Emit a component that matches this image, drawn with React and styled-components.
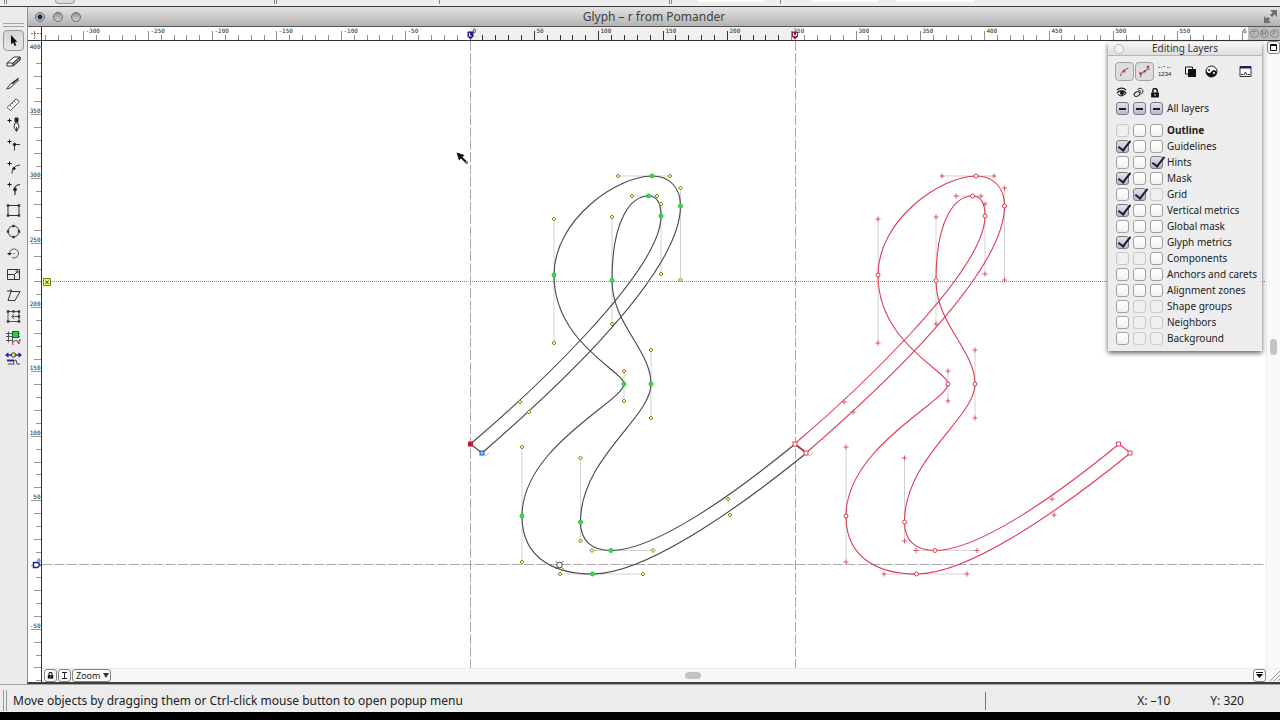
import { useState } from 'react'
import styled, { createGlobalStyle, css } from 'styled-components'

const GlobalStyle = createGlobalStyle`
  * { box-sizing: border-box; }
  html, body, #root { height: 100%; }
  body {
    margin: 0;
    background: #000;
    color: #222;
    font-family: "Noto Sans", "Open Sans", sans-serif;
    overflow: hidden;
  }
  button, select, input { font: inherit; color: inherit; margin: 0; padding: 0; }
  svg { display: block; }
`;

// ---------- page frame ----------
const Page = styled.div`
  display: flex;
  flex-direction: column;
  height: 100vh;
  padding-bottom: 8px;
`;

const TopStrip = styled.header`
  display: flex;
  height: 7px;
  background: #eeeeee;
  border-bottom: 1px solid #3d3f3d;
`;

const StripPart = styled.div`
  width: ${p => p.$width}px;
  height: ${p => p.$tall || 4}px;
  border-right: ${p => p.$edge || 'none'};
  background: ${p => (p.$field ? '#fff' : 'transparent')};
`;

const StripButton = styled.div`
  width: 20px;
  height: 4px;
  border: 1px solid #999;
  border-top: 0;
  border-radius: 0 0 4px 4px;
  background: #ddd;
`;

const Body = styled.main`
  flex: 1;
  min-height: 0;
  display: flex;
`;

const Tools = styled.nav`
  width: 27px;
  flex: none;
  background: #ebebeb;
  display: flex;
  flex-direction: column;
  align-items: center;
  padding-top: 16px;
`;

const ToolGrip = styled.div`
  width: 21px;
  height: 4px;
  border: solid #a5a5a5;
  border-width: 1px 0;
  margin-bottom: 3px;
`;

const ToolList = styled.div`
  height: 340px;
  display: flex;
  flex-direction: column;
  justify-content: space-between;
`;

const ToolButton = styled.button`
  width: 21px;
  height: 21px;
  display: grid;
  place-items: center;
  border: 1px solid transparent;
  border-radius: 4px;
  background: none;
  ${p => p.$on && css`
    border-color: #969696;
    background: linear-gradient(#d6d6d6, #e6e6e6);
  `}
`;

const Window = styled.section`
  flex: 1;
  min-width: 0;
  display: flex;
  flex-direction: column;
  border-left: 1px solid #8f8f8f;
  border-bottom: 2px solid #3c3f3c;
  background: #fff;
`;

const TitleBar = styled.div`
  height: 20px;
  display: grid;
  grid-template-columns: 1fr auto 1fr;
  align-items: center;
  padding: 0 3px 0 7px;
  background: linear-gradient(#e3e3e3, #b3b3b3);
  border-bottom: 1px solid #555;
`;

const Title = styled.h1`
  margin: 0 4px 0 0;
  font-size: 12px;
  line-height: 16px;
  font-weight: 400;
  color: #424242;
`;

const Lights = styled.div`
  display: flex;
  gap: 8px;
`;

const Light = styled.button`
  width: 10px;
  height: 10px;
  border: 1px solid #666b70;
  border-radius: 50%;
  background: ${p => (p.$dot
    ? 'radial-gradient(circle, #23303c 0 2px, #b6c2cc 3px)'
    : 'linear-gradient(#8f969c, #ccd3d9)')};
`;

const Expand = styled.button`
  justify-self: end;
  border: 0;
  background: none;
`;

// ---------- rulers and drawing area ----------
const Workspace = styled.div`
  flex: 1;
  min-height: 0;
  position: relative;
  display: grid;
  grid-template-columns: 14px 1fr 14px;
  grid-template-rows: 14px 1fr 14px;
`;

const Corner = styled.div`
  border-right: 1px solid #333;
  border-bottom: 1px solid #333;
`;

const TopRuler = styled.div`
  grid-column: 2 / 4;
  display: flex;
  overflow: hidden;
  border-bottom: 1px solid #333;
`;

const SideRuler = styled.div`
  grid-column: 1;
  grid-row: 2 / 4;
  overflow: hidden;
  border-right: 1px solid #333;
`;

const RulerSvg = styled.svg`
  flex: 1;
  min-width: 0;
  width: 100%;
  height: 100%;
  text {
    font-family: "DejaVu Sans Mono", monospace;
    font-size: 6px;
    fill: #222;
  }
`;

const RulerModes = styled.div`
  width: 32px;
  display: flex;
  align-items: center;
  justify-content: center;
  gap: 1px;
  background: #bdbdbd;
`;

const Mode = styled.button`
  width: 9px;
  height: 9px;
  border: 1px solid #858585;
  border-radius: 50%;
  background: none;
  color: #666;
  font-size: 6px;
  line-height: 7px;
  text-align: center;
`;

const Canvas = styled.svg`
  grid-column: 2;
  grid-row: 2;
  width: 100%;
  height: 100%;
  min-height: 0;
  overflow: hidden;
`;

const SideScroll = styled.div`
  grid-column: 3;
  grid-row: 2;
  display: flex;
  flex-direction: column;
  align-items: center;
  background: #fafafa;
  border-left: 1px solid #ececec;
`;

const Spacer = styled.div`
  flex: ${p => p.$grow};
`;

const ScrollThumb = styled.div`
  width: ${p => (p.$wide ? 16 : 7)}px;
  height: ${p => (p.$wide ? 7 : 16)}px;
  border-radius: 4px;
  background: #c4c4c4;
`;

const BottomBar = styled.div`
  grid-column: 2 / 4;
  grid-row: 3;
  display: flex;
  align-items: center;
  padding-left: 2px;
  background: #f7f7f7;
  border-top: 1px solid #ececec;
`;

const BarGroup = styled.div`
  display: flex;
  gap: ${p => p.$gap}px;
`;

const SmallButton = styled.button`
  width: 13px;
  height: 13px;
  display: grid;
  place-items: center;
  border: 1px solid #858585;
  border-radius: 3px;
  background: #fafafa;
`;

const ZoomBox = styled.label`
  width: 39px;
  height: 13px;
  display: flex;
  align-items: center;
  padding-left: 3px;
  border: 1px solid #858585;
  border-radius: 3px;
  background: #fafafa;
  select {
    appearance: none;
    width: 27px;
    flex: none;
    border: 0;
    background: none;
    font-size: 9px;
    line-height: 11px;
  }
`;

// ---------- status bar ----------
const Status = styled.footer`
  height: 28px;
  display: flex;
  align-items: center;
  padding: 4px 36px 0 3px;
  border-top: 1px solid #a3a3a3;
  background: #ececec;
  font-size: 12px;
  line-height: 18px;
`;

const StatusGrip = styled.div`
  width: 4px;
  height: 21px;
  border: solid #999;
  border-width: 0 1px;
  margin-right: 6px;
`;

const StatusText = styled.span`
  flex: 1;
  white-space: nowrap;
`;

const Coordinates = styled.div`
  width: 259px;
  height: 18px;
  display: flex;
  justify-content: flex-end;
  gap: 40px;
  border-left: 1px solid #777;
`;

// ---------- layers panel ----------
const Panel = styled.aside`
  position: absolute;
  top: 15px;
  right: 18px;
  width: 154px;
  padding-bottom: 5px;
  background: #ededed;
  box-shadow: 0 2px 5px rgba(0, 0, 0, 0.65);
  font-size: 10px;
  line-height: 16px;
`;

const PanelTitle = styled.div`
  height: 14px;
  display: grid;
  grid-template-columns: 12px 1fr 12px;
  align-items: center;
  padding: 0 6px;
  background: linear-gradient(#f6f6f6, #dedede);
  border-bottom: 1px solid #b5b5b5;
  h2 {
    margin: 0;
    font-size: 10px;
    line-height: 13px;
    font-weight: 400;
    text-align: center;
    color: #333;
  }
`;

const PanelClose = styled.button`
  width: 10px;
  height: 10px;
  border: 1px solid #bbb;
  border-radius: 50%;
  background: #f3f3f3;
`;

const PanelTools = styled.div`
  display: flex;
  gap: 1px;
  padding: 6px 7px 4px 7px;
`;

const PanelButton = styled.button`
  width: 19px;
  height: 19px;
  display: grid;
  place-items: center;
  border: 1px solid ${p => (p.$on ? '#a3a3a3' : 'transparent')};
  border-radius: 4px;
  background: ${p => (p.$on ? '#dddddd' : 'none')};
  margin-left: ${p => p.$gap || 0}px;
`;

const HeadRow = styled.div`
  display: grid;
  grid-template-columns: repeat(3, 17px) 1fr;
  height: 15px;
  align-items: center;
  padding-left: 8px;
`;

const LayerRow = styled.div`
  display: grid;
  grid-template-columns: repeat(3, 17px) 1fr;
  height: 16px;
  align-items: center;
  padding-left: 8px;
  margin-bottom: ${p => (p.$first ? 6 : 0)}px;
  label {
    white-space: nowrap;
    font-weight: ${p => (p.$bold ? 700 : 400)};
  }
`;

const Tick = styled.input`
  appearance: none;
  position: relative;
  width: 13px;
  height: 13px;
  border: 1px solid #a0a0a0;
  border-radius: 3px;
  background: linear-gradient(#fff, #f1f1f1);
  &:disabled { border-color: #c9c9c9; background: #efefef; }
  &:checked {
    border-color: #777c8c;
    background: linear-gradient(#e0e2ec, #b6bbcc);
  }
  &:checked::after {
    content: '';
    position: absolute;
    left: 4px;
    top: -3px;
    width: 5px;
    height: 11px;
    border: solid #1c1d26;
    border-width: 0 2px 2px 0;
    transform: rotate(38deg);
  }
  ${p => p.$mixed && css`
    &:checked::after {
      left: 2px;
      top: 5px;
      width: 7px;
      height: 2px;
      border-width: 2px 0 0 0;
      transform: none;
    }
  `}
`;

// ---------- icons ----------
const Icon = ({ size = 19, children }) => (
  <svg width={size} height={size} viewBox="0 0 19 19" fill="none" stroke="#333" strokeWidth="1">
    {children}
  </svg>
);

const Plus = () => <path d="M3.500 4.500h4M5.500 2.500v4" stroke="#111" />;
const Dots = ({ at }) => at.map(([x, y]) => (
  <rect key={`${x}-${y}`} x={x - 1.2} y={y - 1.2} width="2.4" height="2.4" fill="#333" stroke="none" />
));

const tools = [
  ['Pointer', <path d="M7 4v9.500l2.200-1.900 1.500 3.400 1.700-.8-1.600-3.200 2.500-.2z" fill="#111" stroke="none" />],
  ['Eraser', <><path d="M3 11l7-6h6l-7 6zM3 11v3h6v-3M9 14l7-6V5" fill="#fff" /><path d="M9 11l7-6v3l-7 6z" fill="#999" /></>],
  ['Knife', <><path d="M2.500 15l5-6 2.500 1.200L6.500 14zM7.500 9L15 4M10 10.200L15 6" fill="#ddd" strokeWidth=".9" /><path d="M9 9l5-4" strokeWidth="1.400" /></>],
  ['Ruler', <path d="M3 12.500L12 4l3.500 2.500L6.500 15.500zM6 10l1.500 1.200M8 8l1.500 1.200M10 6.200l1.500 1.200" fill="#fff" stroke="#555" />],
  ['Pen', <><Plus /><path d="M11 2h3v4h-3z" fill="#111" /><path d="M11 7h3l1 4-2.500 4.500-2.500-4.500zM12.500 15v-4" fill="#fff" /></>],
  ['Add corner', <><Plus /><path d="M10 7.500h6M10.500 7.500v6" /><circle cx="10.500" cy="7.500" r="1.300" fill="#111" /></>],
  ['Add curve', <><Plus /><path d="M8 14.500c0-5 3-8 8-8.500" /><circle cx="10" cy="9.500" r="1.200" fill="#111" /></>],
  ['Add tangent', <><Plus /><path d="M11 15V8c0-2.500 2-3 5-3.500" strokeWidth="1.200" /><circle cx="11" cy="9.500" r="1.500" fill="#111" /></>],
  ['Rectangle', <><path d="M4 4.500h11v10H4z" /><Dots at={[[4, 4.500], [15, 4.500], [4, 14.500], [15, 14.500]]} /></>],
  ['Ellipse', <><circle cx="9.500" cy="9.500" r="5.500" /><Dots at={[[4, 9.500], [15, 9.500], [9.500, 4], [9.500, 15]]} /></>],
  ['Rotate', <><path d="M5.500 9.500a4.500 4.500 0 1 1 2.500 4" stroke="#555" /><path d="M3 9h5l-2.500 2.500z" fill="#222" stroke="none" /><path d="M9 9.500h2" stroke="#888" /></>],
  ['Scale', <path d="M3.500 4.500h12v10h-12zM3.500 9.500h7v5M11 9l3-3M11.500 6H14v2.500" />],
  ['Slant', <><path d="M7 5.500h9l-5 9H4z" /><path d="M3 5h5M6 3.500l2 1.500-2 1.500" /></>],
  ['Free transform', <><path d="M4 4.500h11v10H4zM8 9.500h6M10 7l-2 2.500 2 2.500" stroke="#555" /><Dots at={[[4, 4.500], [9.500, 4.500], [15, 4.500], [4, 14.500], [15, 14.500], [15, 9.500]]} /></>],
  ['Grid snap', <><path d="M2 4.500h14M2 7.500h14M2 11.500h7M4.500 2.500v11M8.500 2.500v11" stroke="#555" /><rect x="8.500" y="2.500" width="6" height="6" fill="#32c84b" stroke="#157026" /><path d="M9 16c-1-3 1-5 3-4M12 11l3 4v-4h2" stroke="#7d3652" /></>],
  ['Metrics snap', <><path d="M2 5h5M12 5h5M4.500 3L2 5l2.500 2M14.500 3L17 5l-2.500 2" stroke="#262a9c" strokeWidth="1.300" /><circle cx="9.500" cy="5" r="2.200" fill="#ece94b" /><path d="M3 10.500h7" stroke="#2427b8" strokeWidth="2" /><path d="M4 14h5M10 15c-1-3 0-5 2-5l1 4h3" stroke="#445" /></>],
];

// ---------- glyph data, in drawing coordinates ----------
const OUTLINE = 'M470.500 444C520 402 661 274 661 216C661 204 657 196 648.500 196C632 196 612 217 612 280.500C612 324 651 350 651 384C651 418 580.500 458 580.500 522C580.500 541 592 550.500 611 550.500C653 550.500 728 499 795 444L806.500 453C730 515 643 574 592.500 574C560 574 522 562 522 516C522 447 624 401 624 384C624 371 554 343 554 275C554 219 618 176 652 176C670 176 680.500 188 680.500 206C680.500 280 529 412 482 453Z';
const SHIFT = 324;

const nodes = [[661, 216], [648.5, 196], [612, 280.5], [651, 384], [580.5, 522], [611, 550.5], [592.5, 574], [522, 516], [624, 384], [554, 275], [652, 176], [680.5, 206]];

const handles = [
  [520, 402, 0], [661, 274, 1, 661, 216], [661, 204, 1, 661, 216], [657, 196, 1, 648.5, 196],
  [632, 196, 1, 648.5, 196], [612, 217, 1, 612, 280], [612, 324, 1, 612, 280], [651, 350, 1, 651, 384],
  [651, 418, 1, 651, 384], [580.5, 458, 1, 580.5, 522], [580.5, 541, 1, 580.5, 522], [592, 550.5, 1, 611, 550.5],
  [653, 550.5, 1, 611, 550.5], [728, 499, 0], [730, 515, 0], [643, 574, 1, 592, 574],
  [560, 574, 1, 592, 574], [522, 562, 1, 522, 516], [522, 447, 1, 522, 516], [624, 401, 1, 624, 384],
  [624, 371, 1, 624, 384], [554, 343, 1, 554, 275], [554, 219, 1, 554, 275], [618, 176, 1, 652, 176],
  [670, 176, 1, 652, 176], [680.5, 188, 1, 680.5, 206], [680.5, 280, 1, 680.5, 206], [529, 412, 0],
];

const Glyph = ({ red }) => (
  <g transform={red ? `translate(${SHIFT} 0)` : undefined} fill="none">
    {handles.map(([x, y, arm, nx, ny], i) => arm ? (
      <path key={i} d={`M${nx} ${ny}L${x} ${y}`} stroke="#d2d2d2" />
    ) : null)}
    <path d={OUTLINE} stroke={red ? '#e03a54' : '#484448'} strokeWidth="1.1" />
    {handles.map(([x, y], i) => red
      ? <path key={i} d={`M${x - 2.5} ${y}h5M${x} ${y - 2.5}v5`} stroke="#d9566a" />
      : <path key={i} d={`M${x - 2} ${y}l2-2 2 2-2 2z`} stroke="#858520" fill="#f4f4a0" />)}
    {nodes.map(([x, y], i) => (
      <circle key={i} cx={x} cy={y} r="2" stroke={red ? '#e03a54' : '#1fc32c'} fill={red ? '#fff' : '#3fe04a'} />
    ))}
    {red && <path d="M471 444L482.500 453" stroke="#b3263a" strokeWidth="1.5" />}
    <rect x={red ? 469 : 468.5} y="442" width="4" height="4" stroke={red ? '#e03a54' : '#b81d35'} fill={red ? '#fff' : '#b81d35'} />
    <rect x="480" y="451" width="4" height="4" stroke={red ? '#e03a54' : '#1e5fa8'} fill={red ? '#fff' : '#8fc7f5'} />
    {red && <path d="M792.500 442h4v4h-4zM804 451h4v4h-4z" stroke="#e03a54" fill="#fff" />}
    <path d="M485 456l4-3" stroke="#bbb" />
  </g>
);

const UNIT = 1.2868;
const range = (from, to) => Array.from({ length: to - from + 1 }, (_, i) => from + i);

const TopMarks = () => (
  <RulerSvg aria-hidden="true">
    <g transform="translate(-42 -27)">
      <rect x="470" y="27" width="326" height="13" fill="#eff0ed" />
      {range(-33, 60).map(n => {
        const x = Math.round(470.5 + n * 10 * UNIT) - 0.5;
        const major = n % 5 === 0;
        return (
          <g key={n}>
            <path d={`M${x} 40V${major ? 31 : 35}`} stroke={n > 0 && n < 25 ? '#333' : '#8d8d8d'} />
            {major && n < 60 && <text x={x + 2} y="33">{n * 10}</text>}
          </g>
        );
      })}
      {/* only the first digit of 600 fits beside the mode buttons */}
      <text x="1243" y="33">6</text>
      <path d="M467.500 31.500h6v5l-3 3-3-3z" fill="#221b86" />
      <path d="M469.500 33v3h2" stroke="#fff" fill="none" />
      <path d="M792 31.500h6v5l-3 3-3-3z" fill="#852544" />
      <path d="M793.500 33v2.500h3V33" stroke="#fff" fill="none" />
    </g>
  </RulerSvg>
);

const SideMarks = () => (
  <RulerSvg aria-hidden="true">
    <g transform="translate(-28 -41)">
      {range(-9, 39).map(n => {
        const y = Math.round(564.5 - n * 10 * UNIT) + 0.5;
        const major = n % 5 === 0;
        return (
          <g key={n}>
            <path d={`M${major ? 31 : n % 2 ? 36 : 34} ${y}H41`} stroke="#999" />
            {major && n !== 0 && <text x="40.500" y={y - 2} textAnchor="end">{n * 10}</text>}
          </g>
        );
      })}
      <text x="40.500" y="49" textAnchor="end">400</text>
      <text x="40.500" y="563" textAnchor="end">0</text>
      <path d="M33.500 562.500h4l2.500 2.500-2.500 2.500h-4z" stroke="#28218e" fill="#fff" strokeWidth="1.500" />
    </g>
  </RulerSvg>
);

const layers = [
  // name, [view, snap, lock] : 1 ticked, 0 empty, - disabled
  ['Outline', '-00', true],
  ['Guidelines', '100'],
  ['Hints', '001'],
  ['Mask', '100'],
  ['Grid', '01-'],
  ['Vertical metrics', '100'],
  ['Global mask', '000'],
  ['Glyph metrics', '100'],
  ['Components', '--0'],
  ['Anchors and carets', '000'],
  ['Alignment zones', '000'],
  ['Shape groups', '0--'],
  ['Neighbors', '0--'],
  ['Background', '0--'],
];
const columns = ['visible', 'snap', 'lock'];

const Layer = ({ name, flags, bold, mixed }) => {
  const id = name.toLowerCase().replace(/ /g, '-');
  return (
    <LayerRow $bold={bold} $first={mixed}>
      {columns.map((column, i) => (
        <Tick
          key={column}
          type="checkbox"
          id={`${id}-${column}`}
          aria-label={`${name} ${column}`}
          defaultChecked={flags[i] === '1'}
          disabled={flags[i] === '-'}
          $mixed={mixed}
        />
      ))}
      <label htmlFor={`${id}-visible`}>{name}</label>
    </LayerRow>
  );
};

const Lock = ({ size = 9 }) => (
  <svg width={size} height={size} viewBox="0 0 9 9">
    <path d="M1 4h7v4.500H1z" fill="#111" />
    <path d="M2.500 4V2.500a2 2 0 0 1 4 0V4" fill="none" stroke="#111" strokeWidth="1.300" />
    <path d="M4.500 5.500v1.500" stroke="#ddd" />
  </svg>
);

const LayersPanel = () => (
  <Panel>
    <PanelTitle>
      <PanelClose aria-label="Close panel" />
      <h2>Editing Layers</h2>
    </PanelTitle>
    <PanelTools>
      <PanelButton $on aria-label="Nodes">
        <svg width="15" height="15" viewBox="0 0 15 15">
          <path d="M3.500 12c1-4 3-6 8-8" fill="none" stroke="#555" />
          <circle cx="7" cy="7" r="1.500" fill="#d43552" />
        </svg>
      </PanelButton>
      <PanelButton $on aria-label="Handles">
        <svg width="15" height="15" viewBox="0 0 15 15">
          <path d="M3.500 13c1-4 3-6 9-8" fill="none" stroke="#555" />
          <path d="M4 9.500L11 3.500" stroke="#c98a95" strokeDasharray="2 1" />
          <circle cx="3.500" cy="9.500" r="1.400" fill="#d43552" />
          <circle cx="7.500" cy="7.500" r="1" fill="#333" />
          <circle cx="11" cy="3" r="1.400" fill="#d43552" />
        </svg>
      </PanelButton>
      <PanelButton aria-label="Coordinates">
        <svg width="15" height="15" viewBox="0 0 15 15">
          <path d="M1 3.500h4M6 2.500h3M10 3.500h4" stroke="#777" strokeDasharray="2 1" />
          <text x="1" y="12" fontSize="6" fontFamily="Liberation Sans" fill="#222">1234</text>
        </svg>
      </PanelButton>
      <PanelButton $gap={6} aria-label="Fill">
        <svg width="15" height="15" viewBox="0 0 15 15">
          <path d="M2.500 3h7v7h-7z" fill="#fff" stroke="#111" />
          <path d="M5 5h8v8H5z" fill="#111" />
        </svg>
      </PanelButton>
      <PanelButton $gap={1} aria-label="Invert">
        <svg width="15" height="15" viewBox="0 0 15 15">
          <circle cx="7.500" cy="7.500" r="5.500" fill="#fff" stroke="#111" />
          <g transform="rotate(-60 7.500 7.500)">
            <path d="M7.500 2a5.500 5.500 0 0 0 0 11a2.750 2.750 0 0 0 0-5.500a2.750 2.750 0 0 1 0-5.500z" fill="#111" />
            <circle cx="7.500" cy="4.750" r="1" fill="#111" />
            <circle cx="7.500" cy="10.250" r="1" fill="#fff" />
          </g>
        </svg>
      </PanelButton>
      <PanelButton $gap={14} aria-label="Options">
        <svg width="15" height="15" viewBox="0 0 15 15">
          <path d="M2 2.500h11v10H2z" fill="#fff" stroke="#333" />
          <path d="M2 2.500h11v2H2z" fill="#17178a" />
          <path d="M3 10.500h2M6 11l1.500-3L9 11M10 10.500h2" fill="none" stroke="#333" />
        </svg>
      </PanelButton>
    </PanelTools>
    <HeadRow>
      <svg width="11" height="11" viewBox="0 0 11 11">
        <path d="M1 3c3-3 7-2 9 0M1 6c3-3 6-3 9 0-2 3-6 4-8 1" fill="none" stroke="#222" strokeWidth="1.200" />
        <circle cx="6" cy="6" r="2" fill="#111" />
      </svg>
      <svg width="11" height="11" viewBox="0 0 11 11">
        <ellipse cx="4" cy="7" rx="3" ry="2.200" fill="none" stroke="#333" strokeWidth="1.200" transform="rotate(-35 4 7)" />
        <path d="M4.500 2.500L6 1.500c3-1 5 2 3.500 4.500L8 7.500M5 4.500l1-.8c1.500-.5 2.200.8 1.500 1.800" fill="none" stroke="#333" />
      </svg>
      <Lock size={10} />
    </HeadRow>
    <Layer name="All layers" flags="111" mixed />
    {layers.map(([name, flags, bold]) => <Layer key={name} name={name} flags={flags} bold={bold} />)}
  </Panel>
);

const App = () => {
  const [tool, setTool] = useState('Pointer');
  return (
    <>
      <GlobalStyle />
      <Page>
        <TopStrip>
          <StripPart $width={7} $edge="3px double #888" />
          <StripPart $width={48} />
          <StripButton />
          <StripPart $width={202} $edge="3px double #888" />
          <StripPart $width={163} $edge="1px solid #888" />
          <StripPart $width={232} $edge="3px double #888" />
          <StripPart $width={26} />
          <StripPart $width={66} $tall={2} $field />
          <StripPart $width={17} $edge="1px solid #888" />
          <StripPart $width={31} />
          <StripPart $width={66} $tall={2} $field />
          <StripPart $width={18} />
          <StripPart $width={78} $tall={2} $field />
        </TopStrip>
        <Body>
          <Tools>
            <ToolGrip />
            <ToolList>
              {tools.map(([name, drawing]) => (
                <ToolButton key={name} aria-label={name} $on={tool === name} onClick={() => setTool(name)}>
                  <Icon>{drawing}</Icon>
                </ToolButton>
              ))}
            </ToolList>
          </Tools>
          <Window>
            <TitleBar>
              <Lights>
                <Light $dot aria-label="Close" />
                <Light aria-label="Minimize" />
                <Light aria-label="Maximize" />
              </Lights>
              <Title>Glyph – r from Pomander</Title>
              <Expand aria-label="Full screen">
                <svg width="13" height="13" viewBox="0 0 13 13" fill="#707070">
                  <path d="M6 0h7v7l-2.500-2.500L8 7 6 5l2.500-2.500z" />
                  <path d="M0 6l2.500 2.500L4 7l2 2-1.500 1.500L7 13H0z" />
                </svg>
              </Expand>
            </TitleBar>
            <Workspace>
              <Corner>
                <svg width="13" height="13" viewBox="0 0 13 13">
                  <path d="M3 6.500h10M6.500 4v9" stroke="#777" strokeDasharray="2 1" />
                </svg>
              </Corner>
              <TopRuler>
                <TopMarks />
                <RulerModes>
                  <Mode>T</Mode>
                  <Mode>M</Mode>
                  <Mode>P</Mode>
                </RulerModes>
              </TopRuler>
              <SideRuler><SideMarks /></SideRuler>
              <Canvas role="img" aria-label="Glyph outline">
                <g transform="translate(-42 -41)">
                  <path d="M42 564.500H1280M470.500 41V700M795.500 41V700" stroke="#aaa" strokeDasharray="10 2.360" />
                  <path d="M52 281.500H1280" stroke="#888" strokeDasharray="1 1" />
                  <path d="M43.500 278.500h7v7h-7z" fill="#f2f75c" stroke="#77791f" />
                  <path d="M45.500 280.500l3 3.500M48.500 280.500l-3 3.500" stroke="#444" />
                  <Glyph />
                  <Glyph red />
                  <g fill="none" stroke="#444">
                    <circle cx="559.500" cy="565" r="2.800" fill="#fff" />
                    <path d="M555.500 561l1.500 1.500M563.500 561l-1.500 1.500M555.500 569l1.500-1.500M563.500 569l-1.500-1.500" />
                  </g>
                  <path d="M456.500 152.500l2.500 8 2-2 5 5 1.500-1.500-5-5 2-2z" fill="#111" />
                  <circle cx="466.500" cy="162.500" r="1.500" fill="#777" />
                </g>
              </Canvas>
              <SideScroll>
                <SmallButton aria-label="Window menu">
                  <svg width="7" height="7"><path d="M.5.5h6v6h-6zM.5 1.500h6" fill="none" stroke="#111" /></svg>
                </SmallButton>
                <Spacer $grow={10} />
                <ScrollThumb />
                <Spacer $grow={11} />
              </SideScroll>
              <BottomBar>
                <BarGroup $gap={1}>
                  <SmallButton aria-label="Lock"><Lock size={7} /></SmallButton>
                  <SmallButton aria-label="Info">
                    <svg width="7" height="7"><path d="M1 .5h5M3.500 0v7M1 6.500h5" stroke="#222" /></svg>
                  </SmallButton>
                  <ZoomBox>
                    <select aria-label="Zoom"><option>Zoom</option></select>
                    <svg width="6" height="5"><path d="M0 0h6L3 5z" fill="#333" /></svg>
                  </ZoomBox>
                </BarGroup>
                <Spacer $grow={52} />
                <ScrollThumb $wide />
                <Spacer $grow={50} />
                <BarGroup $gap={3}>
                  <SmallButton aria-label="Page menu">
                    <svg width="7" height="7"><path d="M0 .5h7" stroke="#111" /><path d="M0 2h7L3.500 6z" fill="#111" /></svg>
                  </SmallButton>
                  <svg width="11" height="13"><path d="M1 12L11 2M5 12l6-6M9 12l2-2" stroke="#999" /></svg>
                </BarGroup>
              </BottomBar>
              <LayersPanel />
            </Workspace>
          </Window>
        </Body>
        <Status>
          <StatusGrip />
          <StatusText>Move objects by dragging them or Ctrl-click mouse button to open popup menu</StatusText>
          <Coordinates>
            <span>X: –10</span>
            <span>Y: 320</span>
          </Coordinates>
        </Status>
      </Page>
    </>
  );
};

export default App;
